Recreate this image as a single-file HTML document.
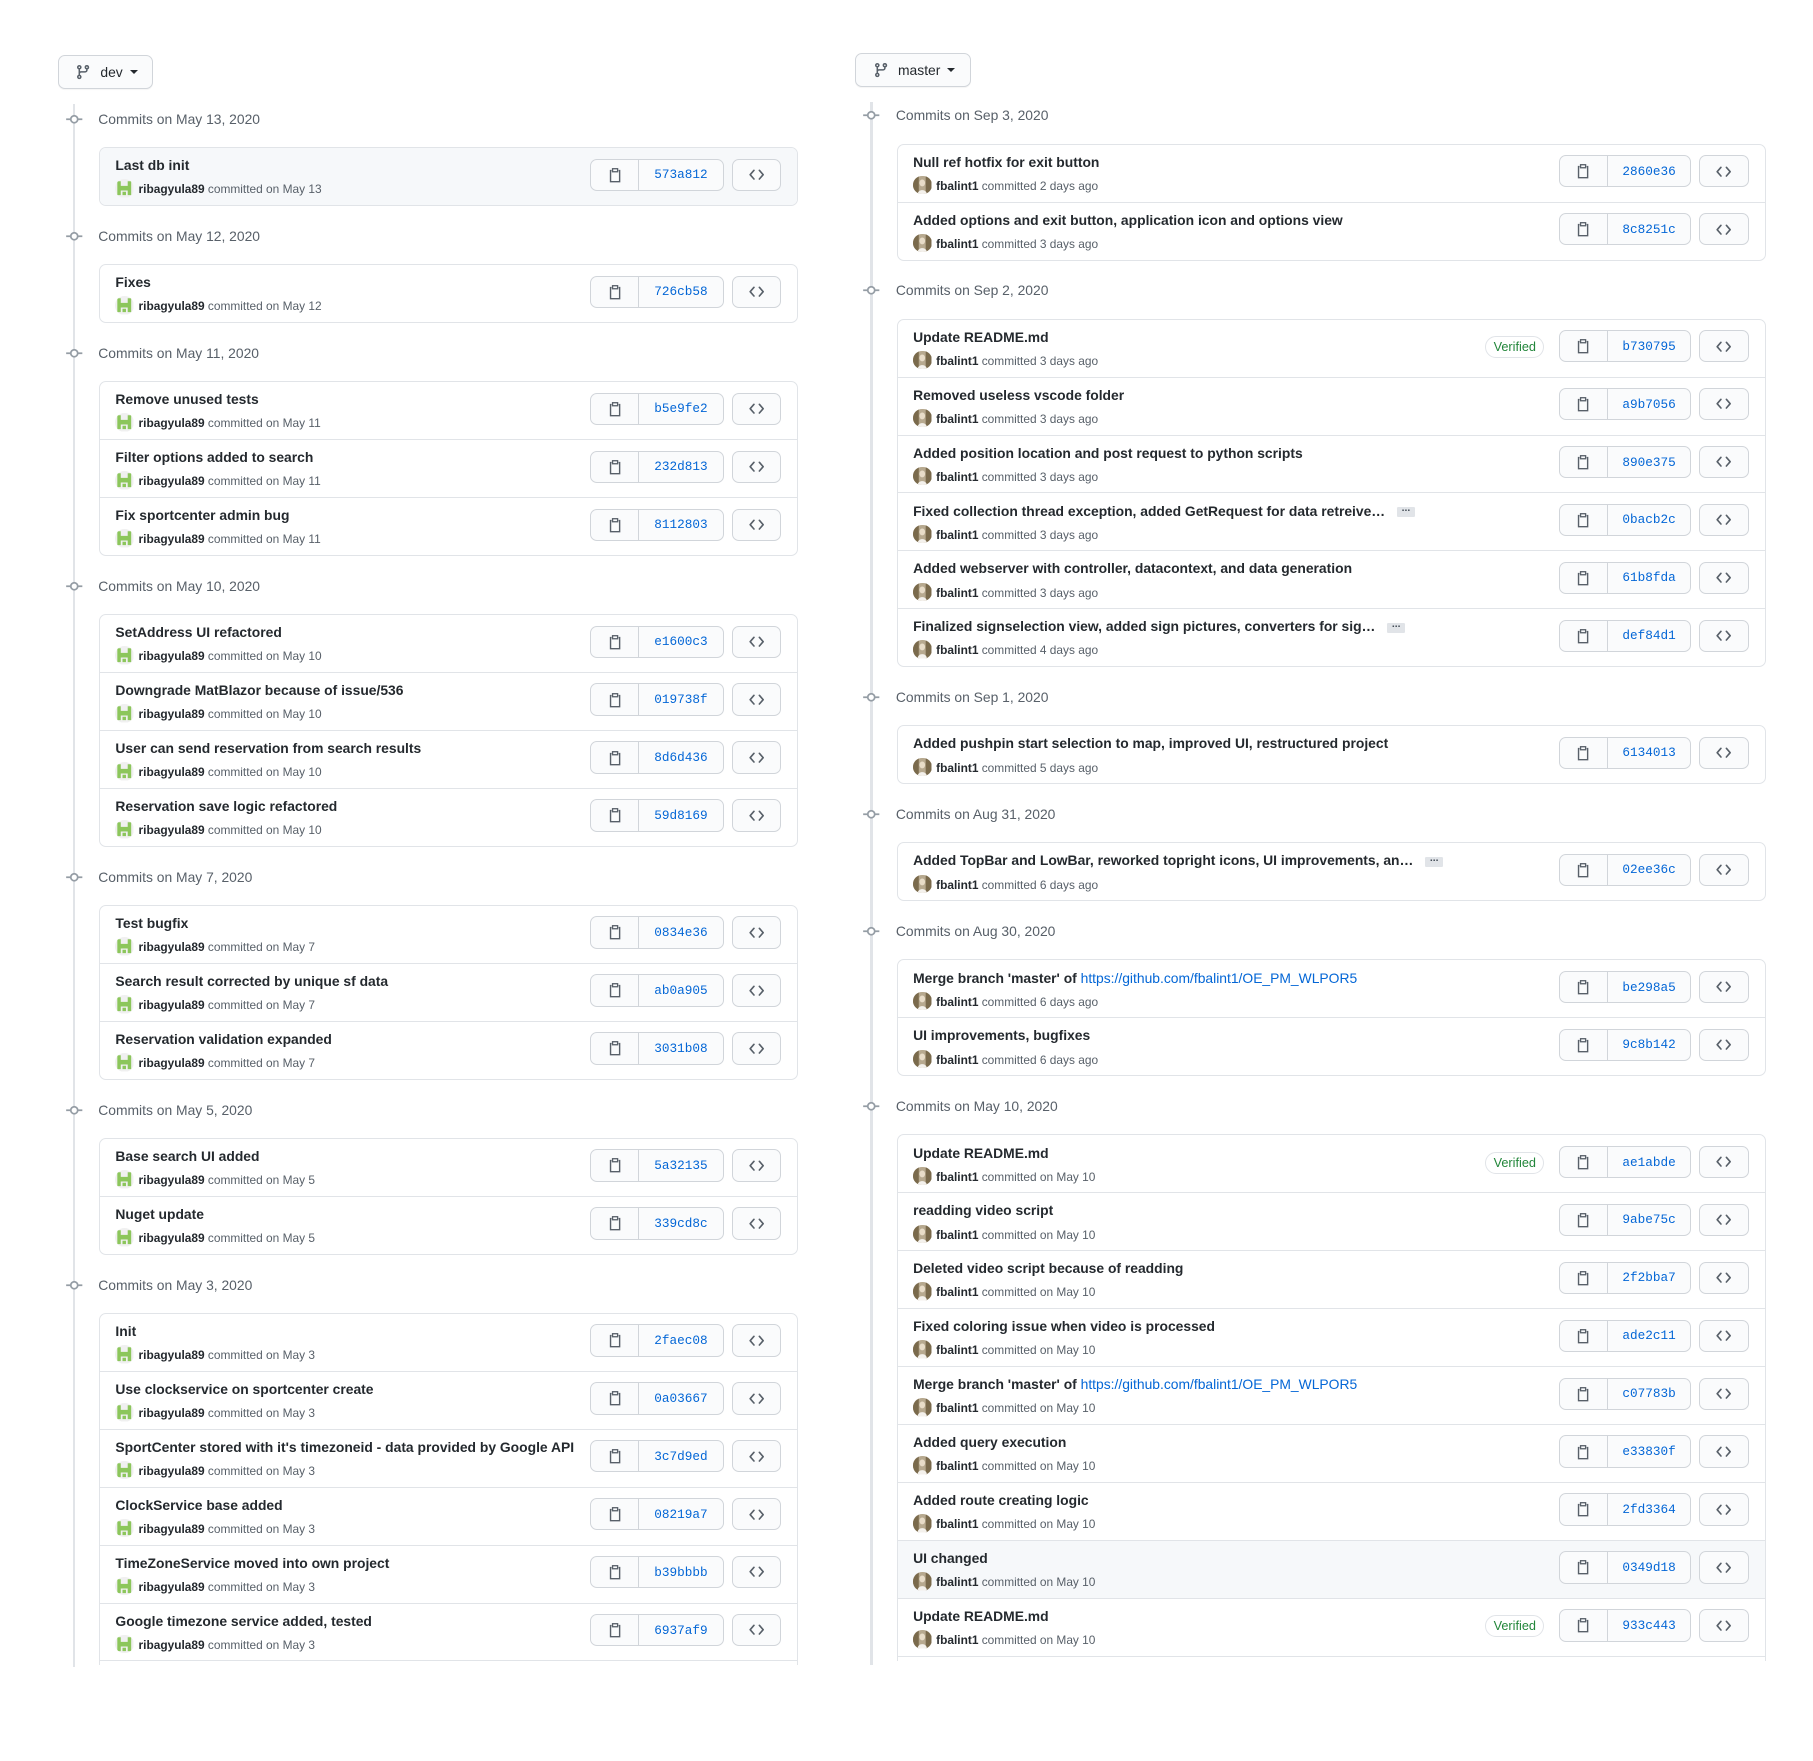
<!DOCTYPE html>
<html><head><meta charset="utf-8"><style>
html,body{margin:0;padding:0;background:#fff;}
body{width:1813px;height:1761px;overflow:hidden;}
#w{zoom:1.156;width:1570px;height:1523px;position:relative;font-family:"Liberation Sans",Arial,sans-serif;color:#24292e;}
.br{position:absolute;height:27px;border:1px solid #d1d5da;border-radius:6px;background:#fafbfc;font-size:12px;color:#24292e;display:flex;align-items:center;box-sizing:border-box;padding:0 12px 0 14px;box-shadow:0 1px 0 rgba(27,31,35,.04);}
.br svg{margin-right:8px}
.br .car{display:inline-block;width:0;height:0;border-left:4px solid transparent;border-right:4px solid transparent;border-top:4px solid #24292e;margin-left:6px;}
.line{position:absolute;width:2px;background:#e1e4e8;}
.tl{position:absolute;overflow:hidden;}
.h{height:50.3px;position:relative;}
.h .tx{position:absolute;left:0;top:18px;font-size:12px;color:#586069;line-height:16px;}
.h svg{position:absolute;top:18px;}
.box{border:1px solid #e1e4e8;border-radius:6px;overflow:hidden;}
.r{height:49.25px;position:relative;border-top:1px solid #e1e4e8;}
.r:first-child{border-top:none;}
.g{background:#f6f8fa;}
.t{position:absolute;left:13px;top:7px;font-size:12px;font-weight:bold;line-height:16px;white-space:nowrap;}
.t a{color:#0366d6;font-weight:normal;text-decoration:none;}
.el{display:inline-block;width:16px;height:9px;background:#e1e4e8;border-radius:1px;margin-left:10px;vertical-align:middle;font-size:9px;line-height:4px;text-align:center;color:#444d56;font-weight:bold;}
.m{position:absolute;left:13px;top:27px;font-size:10.3px;line-height:14px;color:#586069;white-space:nowrap;}
.m b{color:#24292e;}
.m svg{vertical-align:-4px;margin-right:4px;border-radius:50%;overflow:hidden;}
.bt{position:absolute;top:9px;height:28px;display:flex;border:1px solid #d1d5da;border-radius:6px;background:#fafbfc;box-sizing:border-box;}
.cp{width:41px;border-right:1px solid #d1d5da;display:flex;align-items:center;justify-content:center;}
.sha{width:72px;display:flex;align-items:center;justify-content:center;font-family:"Liberation Mono",monospace;font-size:11px;color:#0366d6;}
.cd{position:absolute;top:9px;height:28px;width:43px;border:1px solid #d1d5da;border-radius:6px;background:#fafbfc;box-sizing:border-box;display:flex;align-items:center;justify-content:center;}
.L .bt{right:64px}.L .cd{right:14px}
.R .bt{right:64px}.R .cd{right:14px}
.R .sha{width:71px}
.v{position:absolute;right:191px;top:14px;height:19px;width:51px;box-sizing:border-box;border:1px solid #e1e4e8;border-radius:10px;font-size:11px;color:#22863a;text-align:center;line-height:17px;}
</style></head><body><div id="w">

<svg width="0" height="0" style="position:absolute"><defs>
<symbol id="clip" viewBox="0 0 16 16"><path fill="none" stroke="#586069" stroke-width="1.4" d="M4.5 3.5h-1v11h9v-11h-1"/><rect x="5.5" y="1.7" width="5" height="3" fill="none" stroke="#586069" stroke-width="1.3"/></symbol>
<symbol id="code" viewBox="0 0 16 16"><path fill="none" stroke="#586069" stroke-width="1.5" stroke-linecap="round" stroke-linejoin="round" d="M5.5 4L2 8l3.5 4M10.5 4L14 8l-3.5 4"/></symbol>
<symbol id="node" viewBox="0 0 16 16"><circle cx="8" cy="8" r="3" fill="#fff" stroke="#959da5" stroke-width="1.5"/><path d="M1 8h4M11 8h4" stroke="#959da5" stroke-width="1.5"/></symbol>
<symbol id="ag" viewBox="0 0 16 16"><rect width="16" height="16" fill="#f0f0f0"/><path fill="#8cc65b" d="M2 2h3v12H2zM11 2h3v12h-3zM5 6h6v4H5zM6.5 11h3v3h-3z"/></symbol>
<symbol id="af" viewBox="0 0 16 16"><rect width="16" height="16" fill="#b7a98f"/><path fill="#7a6a4c" d="M0 0h5v16H0zM11 0h5v16h-5z"/><ellipse cx="8" cy="6" rx="2.5" ry="3" fill="#e8dcc8"/><path fill="#f4f1ec" d="M4 16c0-5 8-5 8 0z"/></symbol>
<symbol id="br" viewBox="0 0 16 16"><path fill="#586069" fill-rule="evenodd" d="M11.75 2.5a.75.75 0 100 1.5.75.75 0 000-1.5zm-2.25.75a2.25 2.25 0 113 2.122V6A2.5 2.5 0 0110 8.5H6a1 1 0 00-1 1v1.128a2.251 2.251 0 11-1.5 0V5.372a2.25 2.25 0 111.5 0v1.836A2.492 2.492 0 016 7h4a1 1 0 001-1v-.628A2.25 2.25 0 019.5 3.25zM4.25 12a.75.75 0 100 1.5.75.75 0 000-1.5zM3.5 3.25a.75.75 0 111.5 0 .75.75 0 01-1.5 0z"/></symbol>
</defs></svg>

<div class="br" style="left:50px;top:48px;width:82px;height:29px;"><svg width="14" height="14"><use href="#br"/></svg>dev<span class="car"></span></div>
<div class="br" style="left:740px;top:46px;width:100px;height:29px;"><svg width="14" height="14"><use href="#br"/></svg>master<span class="car"></span></div>

<div class="line" style="left:63px;top:90px;height:1352px;"></div>
<div class="line" style="left:753px;top:88px;height:1352px;"></div>

<!-- LEFT -->
<div class="tl L" style="left:56px;top:77px;width:650px;height:1363px;">
<div class="h"><svg width="16" height="16" style="left:0"><use href="#node"/></svg><div class="tx" style="left:29px">Commits on May 13, 2020</div></div>
<div class="box" style="margin-left:30px;width:603px;">
<div class="r g"><div class="t">Last db init</div><div class="m"><svg width="16" height="16"><use href="#ag"/></svg><b>ribagyula89</b> committed on May 13</div><div class="bt"><span class="cp"><svg width="14" height="14"><use href="#clip"/></svg></span><span class="sha">573a812</span></div><span class="cd"><svg width="15" height="15"><use href="#code"/></svg></span></div>
</div>
<div class="h"><svg width="16" height="16" style="left:0"><use href="#node"/></svg><div class="tx" style="left:29px">Commits on May 12, 2020</div></div>
<div class="box" style="margin-left:30px;width:603px;">
<div class="r"><div class="t">Fixes</div><div class="m"><svg width="16" height="16"><use href="#ag"/></svg><b>ribagyula89</b> committed on May 12</div><div class="bt"><span class="cp"><svg width="14" height="14"><use href="#clip"/></svg></span><span class="sha">726cb58</span></div><span class="cd"><svg width="15" height="15"><use href="#code"/></svg></span></div>
</div>
<div class="h"><svg width="16" height="16" style="left:0"><use href="#node"/></svg><div class="tx" style="left:29px">Commits on May 11, 2020</div></div>
<div class="box" style="margin-left:30px;width:603px;">
<div class="r"><div class="t">Remove unused tests</div><div class="m"><svg width="16" height="16"><use href="#ag"/></svg><b>ribagyula89</b> committed on May 11</div><div class="bt"><span class="cp"><svg width="14" height="14"><use href="#clip"/></svg></span><span class="sha">b5e9fe2</span></div><span class="cd"><svg width="15" height="15"><use href="#code"/></svg></span></div>
<div class="r"><div class="t">Filter options added to search</div><div class="m"><svg width="16" height="16"><use href="#ag"/></svg><b>ribagyula89</b> committed on May 11</div><div class="bt"><span class="cp"><svg width="14" height="14"><use href="#clip"/></svg></span><span class="sha">232d813</span></div><span class="cd"><svg width="15" height="15"><use href="#code"/></svg></span></div>
<div class="r"><div class="t">Fix sportcenter admin bug</div><div class="m"><svg width="16" height="16"><use href="#ag"/></svg><b>ribagyula89</b> committed on May 11</div><div class="bt"><span class="cp"><svg width="14" height="14"><use href="#clip"/></svg></span><span class="sha">8112803</span></div><span class="cd"><svg width="15" height="15"><use href="#code"/></svg></span></div>
</div>
<div class="h"><svg width="16" height="16" style="left:0"><use href="#node"/></svg><div class="tx" style="left:29px">Commits on May 10, 2020</div></div>
<div class="box" style="margin-left:30px;width:603px;">
<div class="r"><div class="t">SetAddress UI refactored</div><div class="m"><svg width="16" height="16"><use href="#ag"/></svg><b>ribagyula89</b> committed on May 10</div><div class="bt"><span class="cp"><svg width="14" height="14"><use href="#clip"/></svg></span><span class="sha">e1600c3</span></div><span class="cd"><svg width="15" height="15"><use href="#code"/></svg></span></div>
<div class="r"><div class="t">Downgrade MatBlazor because of issue/536</div><div class="m"><svg width="16" height="16"><use href="#ag"/></svg><b>ribagyula89</b> committed on May 10</div><div class="bt"><span class="cp"><svg width="14" height="14"><use href="#clip"/></svg></span><span class="sha">019738f</span></div><span class="cd"><svg width="15" height="15"><use href="#code"/></svg></span></div>
<div class="r"><div class="t">User can send reservation from search results</div><div class="m"><svg width="16" height="16"><use href="#ag"/></svg><b>ribagyula89</b> committed on May 10</div><div class="bt"><span class="cp"><svg width="14" height="14"><use href="#clip"/></svg></span><span class="sha">8d6d436</span></div><span class="cd"><svg width="15" height="15"><use href="#code"/></svg></span></div>
<div class="r"><div class="t">Reservation save logic refactored</div><div class="m"><svg width="16" height="16"><use href="#ag"/></svg><b>ribagyula89</b> committed on May 10</div><div class="bt"><span class="cp"><svg width="14" height="14"><use href="#clip"/></svg></span><span class="sha">59d8169</span></div><span class="cd"><svg width="15" height="15"><use href="#code"/></svg></span></div>
</div>
<div class="h"><svg width="16" height="16" style="left:0"><use href="#node"/></svg><div class="tx" style="left:29px">Commits on May 7, 2020</div></div>
<div class="box" style="margin-left:30px;width:603px;">
<div class="r"><div class="t">Test bugfix</div><div class="m"><svg width="16" height="16"><use href="#ag"/></svg><b>ribagyula89</b> committed on May 7</div><div class="bt"><span class="cp"><svg width="14" height="14"><use href="#clip"/></svg></span><span class="sha">0834e36</span></div><span class="cd"><svg width="15" height="15"><use href="#code"/></svg></span></div>
<div class="r"><div class="t">Search result corrected by unique sf data</div><div class="m"><svg width="16" height="16"><use href="#ag"/></svg><b>ribagyula89</b> committed on May 7</div><div class="bt"><span class="cp"><svg width="14" height="14"><use href="#clip"/></svg></span><span class="sha">ab0a905</span></div><span class="cd"><svg width="15" height="15"><use href="#code"/></svg></span></div>
<div class="r"><div class="t">Reservation validation expanded</div><div class="m"><svg width="16" height="16"><use href="#ag"/></svg><b>ribagyula89</b> committed on May 7</div><div class="bt"><span class="cp"><svg width="14" height="14"><use href="#clip"/></svg></span><span class="sha">3031b08</span></div><span class="cd"><svg width="15" height="15"><use href="#code"/></svg></span></div>
</div>
<div class="h"><svg width="16" height="16" style="left:0"><use href="#node"/></svg><div class="tx" style="left:29px">Commits on May 5, 2020</div></div>
<div class="box" style="margin-left:30px;width:603px;">
<div class="r"><div class="t">Base search UI added</div><div class="m"><svg width="16" height="16"><use href="#ag"/></svg><b>ribagyula89</b> committed on May 5</div><div class="bt"><span class="cp"><svg width="14" height="14"><use href="#clip"/></svg></span><span class="sha">5a32135</span></div><span class="cd"><svg width="15" height="15"><use href="#code"/></svg></span></div>
<div class="r"><div class="t">Nuget update</div><div class="m"><svg width="16" height="16"><use href="#ag"/></svg><b>ribagyula89</b> committed on May 5</div><div class="bt"><span class="cp"><svg width="14" height="14"><use href="#clip"/></svg></span><span class="sha">339cd8c</span></div><span class="cd"><svg width="15" height="15"><use href="#code"/></svg></span></div>
</div>
<div class="h"><svg width="16" height="16" style="left:0"><use href="#node"/></svg><div class="tx" style="left:29px">Commits on May 3, 2020</div></div>
<div class="box" style="margin-left:30px;width:603px;">
<div class="r"><div class="t">Init</div><div class="m"><svg width="16" height="16"><use href="#ag"/></svg><b>ribagyula89</b> committed on May 3</div><div class="bt"><span class="cp"><svg width="14" height="14"><use href="#clip"/></svg></span><span class="sha">2faec08</span></div><span class="cd"><svg width="15" height="15"><use href="#code"/></svg></span></div>
<div class="r"><div class="t">Use clockservice on sportcenter create</div><div class="m"><svg width="16" height="16"><use href="#ag"/></svg><b>ribagyula89</b> committed on May 3</div><div class="bt"><span class="cp"><svg width="14" height="14"><use href="#clip"/></svg></span><span class="sha">0a03667</span></div><span class="cd"><svg width="15" height="15"><use href="#code"/></svg></span></div>
<div class="r"><div class="t">SportCenter stored with it's timezoneid - data provided by Google API</div><div class="m"><svg width="16" height="16"><use href="#ag"/></svg><b>ribagyula89</b> committed on May 3</div><div class="bt"><span class="cp"><svg width="14" height="14"><use href="#clip"/></svg></span><span class="sha">3c7d9ed</span></div><span class="cd"><svg width="15" height="15"><use href="#code"/></svg></span></div>
<div class="r"><div class="t">ClockService base added</div><div class="m"><svg width="16" height="16"><use href="#ag"/></svg><b>ribagyula89</b> committed on May 3</div><div class="bt"><span class="cp"><svg width="14" height="14"><use href="#clip"/></svg></span><span class="sha">08219a7</span></div><span class="cd"><svg width="15" height="15"><use href="#code"/></svg></span></div>
<div class="r"><div class="t">TimeZoneService moved into own project</div><div class="m"><svg width="16" height="16"><use href="#ag"/></svg><b>ribagyula89</b> committed on May 3</div><div class="bt"><span class="cp"><svg width="14" height="14"><use href="#clip"/></svg></span><span class="sha">b39bbbb</span></div><span class="cd"><svg width="15" height="15"><use href="#code"/></svg></span></div>
<div class="r"><div class="t">Google timezone service added, tested</div><div class="m"><svg width="16" height="16"><use href="#ag"/></svg><b>ribagyula89</b> committed on May 3</div><div class="bt"><span class="cp"><svg width="14" height="14"><use href="#clip"/></svg></span><span class="sha">6937af9</span></div><span class="cd"><svg width="15" height="15"><use href="#code"/></svg></span></div>
<div class="r"></div>
</div>
</div>

<!-- RIGHT -->
<div class="tl R" style="left:746px;top:74px;width:790px;height:1363px;">
<div class="h"><svg width="16" height="16" style="left:0"><use href="#node"/></svg><div class="tx" style="left:29px">Commits on Sep 3, 2020</div></div>
<div class="box" style="margin-left:30px;width:750px;">
<div class="r"><div class="t">Null ref hotfix for exit button</div><div class="m"><svg width="16" height="16"><use href="#af"/></svg><b>fbalint1</b> committed 2 days ago</div><div class="bt"><span class="cp"><svg width="14" height="14"><use href="#clip"/></svg></span><span class="sha">2860e36</span></div><span class="cd"><svg width="15" height="15"><use href="#code"/></svg></span></div>
<div class="r"><div class="t">Added options and exit button, application icon and options view</div><div class="m"><svg width="16" height="16"><use href="#af"/></svg><b>fbalint1</b> committed 3 days ago</div><div class="bt"><span class="cp"><svg width="14" height="14"><use href="#clip"/></svg></span><span class="sha">8c8251c</span></div><span class="cd"><svg width="15" height="15"><use href="#code"/></svg></span></div>
</div>
<div class="h"><svg width="16" height="16" style="left:0"><use href="#node"/></svg><div class="tx" style="left:29px">Commits on Sep 2, 2020</div></div>
<div class="box" style="margin-left:30px;width:750px;">
<div class="r"><div class="t">Update README.md</div><div class="m"><svg width="16" height="16"><use href="#af"/></svg><b>fbalint1</b> committed 3 days ago</div><span class="v">Verified</span><div class="bt"><span class="cp"><svg width="14" height="14"><use href="#clip"/></svg></span><span class="sha">b730795</span></div><span class="cd"><svg width="15" height="15"><use href="#code"/></svg></span></div>
<div class="r"><div class="t">Removed useless vscode folder</div><div class="m"><svg width="16" height="16"><use href="#af"/></svg><b>fbalint1</b> committed 3 days ago</div><div class="bt"><span class="cp"><svg width="14" height="14"><use href="#clip"/></svg></span><span class="sha">a9b7056</span></div><span class="cd"><svg width="15" height="15"><use href="#code"/></svg></span></div>
<div class="r"><div class="t">Added position location and post request to python scripts</div><div class="m"><svg width="16" height="16"><use href="#af"/></svg><b>fbalint1</b> committed 3 days ago</div><div class="bt"><span class="cp"><svg width="14" height="14"><use href="#clip"/></svg></span><span class="sha">890e375</span></div><span class="cd"><svg width="15" height="15"><use href="#code"/></svg></span></div>
<div class="r"><div class="t">Fixed collection thread exception, added GetRequest for data retreive…<span class="el">...</span></div><div class="m"><svg width="16" height="16"><use href="#af"/></svg><b>fbalint1</b> committed 3 days ago</div><div class="bt"><span class="cp"><svg width="14" height="14"><use href="#clip"/></svg></span><span class="sha">0bacb2c</span></div><span class="cd"><svg width="15" height="15"><use href="#code"/></svg></span></div>
<div class="r"><div class="t">Added webserver with controller, datacontext, and data generation</div><div class="m"><svg width="16" height="16"><use href="#af"/></svg><b>fbalint1</b> committed 3 days ago</div><div class="bt"><span class="cp"><svg width="14" height="14"><use href="#clip"/></svg></span><span class="sha">61b8fda</span></div><span class="cd"><svg width="15" height="15"><use href="#code"/></svg></span></div>
<div class="r"><div class="t">Finalized signselection view, added sign pictures, converters for sig…<span class="el">...</span></div><div class="m"><svg width="16" height="16"><use href="#af"/></svg><b>fbalint1</b> committed 4 days ago</div><div class="bt"><span class="cp"><svg width="14" height="14"><use href="#clip"/></svg></span><span class="sha">def84d1</span></div><span class="cd"><svg width="15" height="15"><use href="#code"/></svg></span></div>
</div>
<div class="h"><svg width="16" height="16" style="left:0"><use href="#node"/></svg><div class="tx" style="left:29px">Commits on Sep 1, 2020</div></div>
<div class="box" style="margin-left:30px;width:750px;">
<div class="r"><div class="t">Added pushpin start selection to map, improved UI, restructured project</div><div class="m"><svg width="16" height="16"><use href="#af"/></svg><b>fbalint1</b> committed 5 days ago</div><div class="bt"><span class="cp"><svg width="14" height="14"><use href="#clip"/></svg></span><span class="sha">6134013</span></div><span class="cd"><svg width="15" height="15"><use href="#code"/></svg></span></div>
</div>
<div class="h"><svg width="16" height="16" style="left:0"><use href="#node"/></svg><div class="tx" style="left:29px">Commits on Aug 31, 2020</div></div>
<div class="box" style="margin-left:30px;width:750px;">
<div class="r"><div class="t">Added TopBar and LowBar, reworked topright icons, UI improvements, an…<span class="el">...</span></div><div class="m"><svg width="16" height="16"><use href="#af"/></svg><b>fbalint1</b> committed 6 days ago</div><div class="bt"><span class="cp"><svg width="14" height="14"><use href="#clip"/></svg></span><span class="sha">02ee36c</span></div><span class="cd"><svg width="15" height="15"><use href="#code"/></svg></span></div>
</div>
<div class="h"><svg width="16" height="16" style="left:0"><use href="#node"/></svg><div class="tx" style="left:29px">Commits on Aug 30, 2020</div></div>
<div class="box" style="margin-left:30px;width:750px;">
<div class="r"><div class="t">Merge branch 'master' of <a>https://github.com/fbalint1/OE_PM_WLPOR5</a></div><div class="m"><svg width="16" height="16"><use href="#af"/></svg><b>fbalint1</b> committed 6 days ago</div><div class="bt"><span class="cp"><svg width="14" height="14"><use href="#clip"/></svg></span><span class="sha">be298a5</span></div><span class="cd"><svg width="15" height="15"><use href="#code"/></svg></span></div>
<div class="r"><div class="t">UI improvements, bugfixes</div><div class="m"><svg width="16" height="16"><use href="#af"/></svg><b>fbalint1</b> committed 6 days ago</div><div class="bt"><span class="cp"><svg width="14" height="14"><use href="#clip"/></svg></span><span class="sha">9c8b142</span></div><span class="cd"><svg width="15" height="15"><use href="#code"/></svg></span></div>
</div>
<div class="h"><svg width="16" height="16" style="left:0"><use href="#node"/></svg><div class="tx" style="left:29px">Commits on May 10, 2020</div></div>
<div class="box" style="margin-left:30px;width:750px;">
<div class="r"><div class="t">Update README.md</div><div class="m"><svg width="16" height="16"><use href="#af"/></svg><b>fbalint1</b> committed on May 10</div><span class="v">Verified</span><div class="bt"><span class="cp"><svg width="14" height="14"><use href="#clip"/></svg></span><span class="sha">ae1abde</span></div><span class="cd"><svg width="15" height="15"><use href="#code"/></svg></span></div>
<div class="r"><div class="t">readding video script</div><div class="m"><svg width="16" height="16"><use href="#af"/></svg><b>fbalint1</b> committed on May 10</div><div class="bt"><span class="cp"><svg width="14" height="14"><use href="#clip"/></svg></span><span class="sha">9abe75c</span></div><span class="cd"><svg width="15" height="15"><use href="#code"/></svg></span></div>
<div class="r"><div class="t">Deleted video script because of readding</div><div class="m"><svg width="16" height="16"><use href="#af"/></svg><b>fbalint1</b> committed on May 10</div><div class="bt"><span class="cp"><svg width="14" height="14"><use href="#clip"/></svg></span><span class="sha">2f2bba7</span></div><span class="cd"><svg width="15" height="15"><use href="#code"/></svg></span></div>
<div class="r"><div class="t">Fixed coloring issue when video is processed</div><div class="m"><svg width="16" height="16"><use href="#af"/></svg><b>fbalint1</b> committed on May 10</div><div class="bt"><span class="cp"><svg width="14" height="14"><use href="#clip"/></svg></span><span class="sha">ade2c11</span></div><span class="cd"><svg width="15" height="15"><use href="#code"/></svg></span></div>
<div class="r"><div class="t">Merge branch 'master' of <a>https://github.com/fbalint1/OE_PM_WLPOR5</a></div><div class="m"><svg width="16" height="16"><use href="#af"/></svg><b>fbalint1</b> committed on May 10</div><div class="bt"><span class="cp"><svg width="14" height="14"><use href="#clip"/></svg></span><span class="sha">c07783b</span></div><span class="cd"><svg width="15" height="15"><use href="#code"/></svg></span></div>
<div class="r"><div class="t">Added query execution</div><div class="m"><svg width="16" height="16"><use href="#af"/></svg><b>fbalint1</b> committed on May 10</div><div class="bt"><span class="cp"><svg width="14" height="14"><use href="#clip"/></svg></span><span class="sha">e33830f</span></div><span class="cd"><svg width="15" height="15"><use href="#code"/></svg></span></div>
<div class="r"><div class="t">Added route creating logic</div><div class="m"><svg width="16" height="16"><use href="#af"/></svg><b>fbalint1</b> committed on May 10</div><div class="bt"><span class="cp"><svg width="14" height="14"><use href="#clip"/></svg></span><span class="sha">2fd3364</span></div><span class="cd"><svg width="15" height="15"><use href="#code"/></svg></span></div>
<div class="r g"><div class="t">UI changed</div><div class="m"><svg width="16" height="16"><use href="#af"/></svg><b>fbalint1</b> committed on May 10</div><div class="bt"><span class="cp"><svg width="14" height="14"><use href="#clip"/></svg></span><span class="sha">0349d18</span></div><span class="cd"><svg width="15" height="15"><use href="#code"/></svg></span></div>
<div class="r"><div class="t">Update README.md</div><div class="m"><svg width="16" height="16"><use href="#af"/></svg><b>fbalint1</b> committed on May 10</div><span class="v">Verified</span><div class="bt"><span class="cp"><svg width="14" height="14"><use href="#clip"/></svg></span><span class="sha">933c443</span></div><span class="cd"><svg width="15" height="15"><use href="#code"/></svg></span></div>
<div class="r"></div>
</div>
</div>

</div></body></html>
